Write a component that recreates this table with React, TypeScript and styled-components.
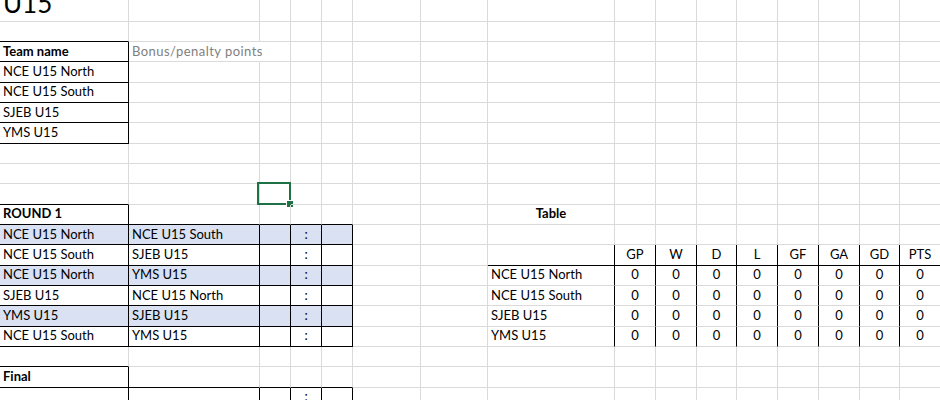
import React from "react";
import styled, { createGlobalStyle } from "styled-components";

const GRID = "#dadada";
const INK = "#000000";
const FILL = "#d9e1f2";

const Global = createGlobalStyle`
  html, body { margin: 0; padding: 0; background: #ffffff; overflow: hidden; }
  body { font-family: Lato, "Open Sans", sans-serif; }
`;

const COLS = [129, 131, 31, 31, 31, 68, 67, 127, 41, 41, 40, 41, 41, 41, 40, 41];
const ROWS = 20;

const Sheet = styled.div`
  display: grid;
  grid-template-columns: ${COLS.map((w) => `${w}px`).join(" ")};
  grid-template-rows: 21.5px repeat(${ROWS - 1}, 20.35px);
  width: 940px;
  height: 400px;
  overflow: hidden;
  background: #ffffff;
  color: #000;
  font-family: Lato, "Open Sans", sans-serif;
  font-size: 13px;
`;

const Cell = styled.div<{
  $right: string;
  $bottom: string;
  $fill?: string;
  $align: "left" | "center";
  $bold?: boolean;
  $muted?: boolean;
  $spill?: boolean;
}>`
  position: relative;
  box-sizing: border-box;
  display: flex;
  align-items: flex-end;
  justify-content: ${(p) => (p.$align === "center" ? "center" : "flex-start")};
  padding: 0 3px 2px 3px;
  border-right: 1px solid ${(p) => p.$right};
  border-bottom: 1px solid ${(p) => p.$bottom};
  background: ${(p) => p.$fill ?? "transparent"};
  font-weight: ${(p) => (p.$bold ? 700 : 400)};
  color: ${(p) => (p.$muted ? "#808080" : "#000")};
  letter-spacing: ${(p) => (p.$muted ? "0.45px" : "0")};
  white-space: nowrap;
  overflow: visible;
  line-height: 1.2;
  z-index: ${(p) => (p.$spill ? 1 : 0)};
`;

const Title = styled.span`
  font-size: 26px;
  line-height: 1;
  margin-bottom: 3px;
`;

const Selection = styled.div`
  position: absolute;
  top: -2px;
  bottom: -1px;
  left: -3px;
  right: -1px;
  border: 2px solid #1e7145;
  pointer-events: none;
  z-index: 3;
`;

const Handle = styled.span`
  position: absolute;
  right: -4px;
  bottom: -4px;
  width: 6px;
  height: 6px;
  background: #1e7145;
  box-shadow: 0 0 0 1px #ffffff;
`;

type Spec = {
  text?: string;
  bold?: boolean;
  center?: boolean;
  fill?: boolean;
  muted?: boolean;
  title?: boolean;
  selected?: boolean;
  spill?: boolean;
};

const colIndex = (l: string) => l.charCodeAt(0) - 65;

const cells: Record<string, Spec> = {};
const put = (ref: string, spec: Spec) => {
  cells[ref] = { ...(cells[ref] ?? {}), ...spec };
};

const teams = ["NCE U15 North", "NCE U15 South", "SJEB U15", "YMS U15"];
const matches: [string, string][] = [
  ["NCE U15 North", "NCE U15 South"],
  ["NCE U15 South", "SJEB U15"],
  ["NCE U15 North", "YMS U15"],
  ["SJEB U15", "NCE U15 North"],
  ["YMS U15", "SJEB U15"],
  ["NCE U15 South", "YMS U15"],
];
const heads = ["GP", "W", "D", "L", "GF", "GA", "GD", "PTS"];
const statCols = "IJKLMNOP".split("");

put("A1", { text: "U15", title: true });
put("A3", { text: "Team name", bold: true });
put("B3", { text: "Bonus/penalty points", muted: true, spill: true });
teams.forEach((t, i) => put(`A${4 + i}`, { text: t }));
put("C10", { selected: true });
put("A11", { text: "ROUND 1", bold: true });
matches.forEach(([h, a], i) => {
  const r = 12 + i;
  put(`A${r}`, { text: h });
  put(`B${r}`, { text: a });
  put(`D${r}`, { text: ":", center: true });
  if (i % 2 === 0) "ABCDE".split("").forEach((c) => put(`${c}${r}`, { fill: true }));
});
put("H11", { text: "Table", bold: true, center: true });
heads.forEach((h, i) => put(`${statCols[i]}13`, { text: h, center: true }));
teams.forEach((t, i) => {
  const r = 14 + i;
  put(`H${r}`, { text: t });
  statCols.forEach((c) => put(`${c}${r}`, { text: "0", center: true }));
});
put("A19", { text: "Final", bold: true });
put("D20", { text: ":", center: true });

// black border edges: key `${row},${col}`
const blackRight = new Set<string>();
const blackBottom = new Set<string>();
const noRight = new Set<string>(["3,1"]);

const boxGrid = (r1: number, c1: number, r2: number, c2: number) => {
  for (let c = c1; c <= c2; c++) blackBottom.add(`${r1 - 1},${c}`);
  for (let r = r1; r <= r2; r++) {
    if (c1 > 0) blackRight.add(`${r},${c1 - 1}`);
    for (let c = c1; c <= c2; c++) {
      blackRight.add(`${r},${c}`);
      blackBottom.add(`${r},${c}`);
    }
  }
};

boxGrid(3, 0, 7, 0);
boxGrid(11, 0, 11, 0);
boxGrid(12, 0, 17, 4);
boxGrid(19, 0, 19, 0);
boxGrid(20, 1, 20, 4);
for (let r = 13; r <= 17; r++) for (let c = colIndex("H"); c <= colIndex("O"); c++) blackRight.add(`${r},${c}`);
for (let c = colIndex("H"); c <= colIndex("P"); c++) blackBottom.add(`13,${c}`);

export default function App() {
  const out: React.ReactNode[] = [];
  for (let r = 1; r <= ROWS; r++) {
    for (let c = 0; c < COLS.length; c++) {
      const ref = `${String.fromCharCode(65 + c)}${r}`;
      const s = cells[ref] ?? {};
      const key = `${r},${c}`;
      const right = noRight.has(key) ? "transparent" : blackRight.has(key) ? INK : GRID;
      const bottom = blackBottom.has(key) ? INK : GRID;
      out.push(
        <Cell
          key={ref}
          $right={right}
          $bottom={bottom}
          $fill={s.fill ? FILL : undefined}
          $align={s.center ? "center" : "left"}
          $bold={s.bold}
          $muted={s.muted}
          $spill={s.spill}
        >
          {s.title ? <Title>{s.text}</Title> : s.text}
          {s.selected && (
            <Selection>
              <Handle />
            </Selection>
          )}
        </Cell>
      );
    }
  }
  return (
    <>
      <Global />
      <Sheet>{out}</Sheet>
    </>
  );
}
